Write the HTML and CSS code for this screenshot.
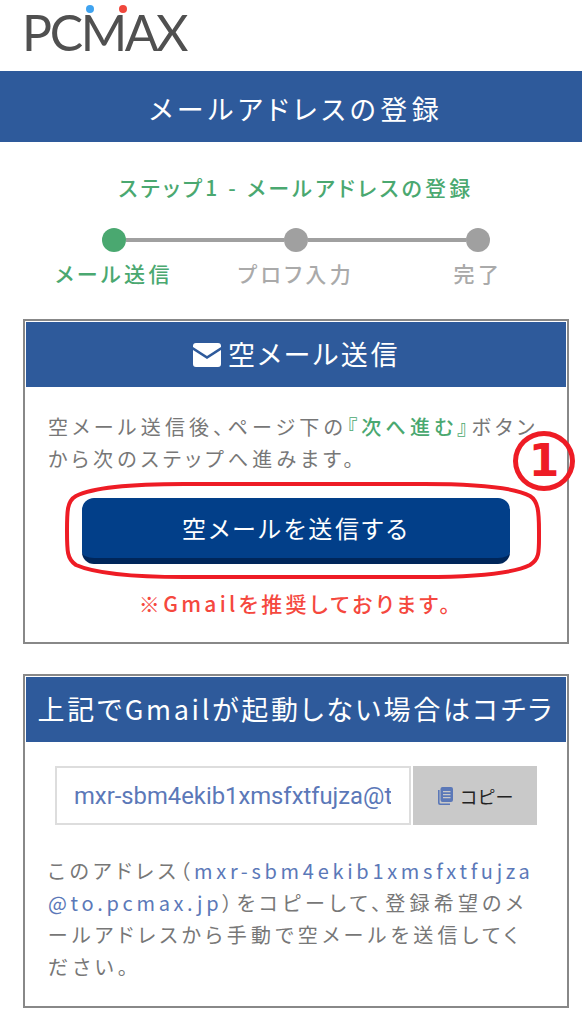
FILE: index.html
```html
<!DOCTYPE html>
<html lang="ja">
<head>
  <meta charset="UTF-8" />
  <meta name="viewport" content="width=device-width, initial-scale=1.0"/>
  <title>メールアドレスの登録</title>
  <link rel="stylesheet" href="styles.css">
</head>
<body>
  <header class="logo-bar">
    <div class="logo">
      <span class="logo-text">PCMAX</span>
      <span class="logo-dot logo-dot-blue"></span>
      <span class="logo-dot logo-dot-red"></span>
    </div>
  </header>

  <h1 class="page-title">メールアドレスの登録</h1>

  <p class="step-title">ステップ1 - メールアドレスの登録</p>

  <div class="stepper">
    <div class="track">
      <span class="dot dot-active"></span>
      <span class="bar"></span>
      <span class="dot"></span>
      <span class="bar"></span>
      <span class="dot"></span>
    </div>
    <div class="labels">
      <span class="label-active">メール送信</span>
      <span>プロフ入力</span>
      <span>完了</span>
    </div>
  </div>

  <section class="card card-send">
    <h2 class="card-head">
      <svg class="mail-icon" viewBox="0 0 28 24" aria-hidden="true">
        <path d="M3 0h22a3 3 0 0 1 3 3v1L14 13 0 4V3a3 3 0 0 1 3-3z" fill="#fff"/>
        <path d="M0 7l14 9 14-9v14a3 3 0 0 1-3 3H3a3 3 0 0 1-3-3z" fill="#fff"/>
      </svg>空メール送信
    </h2>
    <p class="card-text">空メール送信後、ページ下の<span class="green">『次へ進む』</span>ボタンから次のステップへ進みます。</p>
    <button class="send-btn">空メールを送信する</button>
    <p class="note">※Gmailを推奨しております。</p>

    <svg class="mark-oval" viewBox="0 0 478 100" aria-hidden="true">
      <path d="M12 15C30 6 70 3 120 3L360 3C410 3 450 6 466 15C474 20 475 30 475 50C475 70 476 78 466 84C450 92 410 96 360 96L120 96C70 96 30 92 12 84C3 78 3 70 3 50C3 30 3 20 12 15Z" fill="none" stroke="#ee1c25" stroke-width="4"/>
    </svg>
    <span class="mark-num">1</span>
  </section>

  <section class="card card-copy">
    <h2 class="card-head card-head-long">上記でGmailが起動しない場合はコチラ</h2>
    <div class="copy-row">
      <input class="copy-input" type="text" value="mxr-sbm4ekib1xmsfxtfujza@to.pcmax.jp" readonly>
      <button class="copy-btn">
        <svg class="copy-icon" viewBox="0 0 16 18" aria-hidden="true">
          <path d="M1 3v13a2 2 0 0 0 2 2h10v-1.6H3.6a1 1 0 0 1-1-1V3z" fill="#5b78b8"/>
          <path fill-rule="evenodd" d="M5.5 0H14a2 2 0 0 1 2 2v11a2 2 0 0 1-2 2H5.500a2 2 0 0 1-2-2V2a2 2 0 0 1 2-2zM6 4v1.300h7.500V4zM6 7v1.300h7.500V7zM6 10v1.300h7.500V10z" fill="#5b78b8"/>
        </svg>コピー
      </button>
    </div>
    <p class="card-text card-text-copy">このアドレス（<span class="link">mxr-sbm4ekib1xmsfxtfujza</span><br><span class="link">@to.pcmax.jp</span>）をコピーして、登録希望のメールアドレスから手動で空メールを送信してください。</p>
  </section>
</body>
</html>
```

FILE: styles.css
```css
* {
  box-sizing: border-box;
}

body {
  margin: 0;
  background: #fff;
  font-family: "Noto Sans CJK JP", "Noto Sans", sans-serif;
  font-feature-settings: "palt";
  color: #777;
  overflow: hidden;
}

.logo-bar {
  height: 71px;
  padding: 2px 0 0 22px;
}

.logo {
  position: relative;
  width: 170px;
  height: 60px;
}

.logo-text {
  font-family: Lato, sans-serif;
  font-size: 50px;
  line-height: 60px;
  font-weight: 400;
  letter-spacing: -2.4px;
  color: #505050;
}

.logo-dot {
  position: absolute;
  top: 3px;
  width: 8px;
  height: 8px;
  border-radius: 50%;
}

.logo-dot-blue {
  left: 64px;
  background: #3fa3f0;
}

.logo-dot-red {
  left: 97px;
  background: #f0473c;
}

.page-title {
  margin: 0;
  height: 71px;
  padding-left: 10px;
  background: #2e5a9b;
  color: #fff;
  font-size: 27px;
  font-weight: 400;
  line-height: 76px;
  letter-spacing: 4.4px;
  text-align: center;
}

.step-title {
  margin: 30px 0 0;
  height: 30px;
  padding-left: 10px;
  font-size: 21px;
  font-weight: 500;
  line-height: 30px;
  letter-spacing: 3.2px;
  text-align: center;
  color: #4aa870;
}

.stepper {
  margin: 26px 13px 0 23px;
}

.track {
  display: flex;
  align-items: center;
  margin: 0 79px;
  height: 24px;
}

.dot {
  width: 24px;
  height: 24px;
  border-radius: 50%;
  background: #a0a0a0;
  flex: none;
}

.dot-active {
  background: #4aa870;
}

.bar {
  flex: 1;
  height: 4px;
  background: #a0a0a0;
}

.labels {
  display: grid;
  grid-template-columns: repeat(3, 1fr);
  margin-top: 6px;
  height: 30px;
  font-size: 21px;
  font-weight: 500;
  line-height: 30px;
  letter-spacing: 3.4px;
  text-align: center;
  color: #aaa;
}

.label-active {
  color: #4aa870;
}

.card {
  position: relative;
  margin: 30px 13px 0 23px;
  border: 2px solid #888;
  padding: 1px;
}

.card-send {
  height: 325px;
  margin-top: 31px;
}

.card-copy {
  height: 334px;
}

.card-head {
  margin: 0;
  height: 65px;
  background: #2e5a9b;
  color: #fff;
  font-size: 27px;
  font-weight: 400;
  line-height: 64px;
  letter-spacing: 2.6px;
  text-align: center;
}

.card-head-long {
  letter-spacing: 2.7px;
  white-space: nowrap;
}

.mail-icon {
  width: 30px;
  height: 24px;
  margin-right: 6px;
  vertical-align: -2px;
}

.card-text {
  margin: 24px 22px 0 22px;
  font-size: 20px;
  line-height: 32px;
  letter-spacing: 4.2px;
  color: #777;
}

.green {
  font-weight: 500;
  color: #4aa870;
}

.send-btn {
  display: block;
  width: 428px;
  height: 66px;
  margin: 23px 0 0 56px;
  padding: 0 0 2px;
  border: none;
  border-bottom: 6px solid #00265a;
  border-radius: 12px;
  background: #023f89;
  color: #fff;
  font-family: inherit;
  font-feature-settings: "palt";
  font-size: 24px;
  letter-spacing: 2.6px;
}

.note {
  margin: 23px 0 0;
  font-size: 21px;
  font-weight: 500;
  line-height: 32px;
  letter-spacing: 3.3px;
  text-align: center;
  color: #f5483e;
}

/* red hand marks drawn over the card */
.mark-oval {
  position: absolute;
  left: 39px;
  top: 160px;
  width: 478px;
  height: 100px;
}

.mark-num {
  position: absolute;
  left: 488px;
  top: 110px;
  width: 62px;
  height: 60px;
  border: 5px solid #ee1c25;
  border-radius: 50%;
  color: #ee1c25;
  font-family: "DejaVu Sans", sans-serif;
  font-size: 44px;
  font-weight: 700;
  line-height: 50px;
  text-align: center;
}

.copy-row {
  display: flex;
  gap: 2px;
  margin: 24px 0 0 29px;
  height: 59px;
}

.copy-input {
  width: 356px;
  height: 59px;
  padding: 0 18px 0 17px;
  border: 2px solid #ddd;
  background: #fff;
  color: #5b78b8;
  font-family: Roboto, sans-serif;
  font-size: 23.8px;
  outline: none;
}

.copy-btn {
  display: flex;
  align-items: center;
  justify-content: center;
  gap: 7px;
  width: 124px;
  height: 59px;
  padding: 0;
  border: none;
  background: #c9c9c9;
  color: #222;
  font-family: inherit;
  font-size: 18px;
}

.copy-icon {
  width: 16px;
  height: 18px;
}

.card-text-copy {
  margin-top: 30px;
  margin-right: 26px;
}

.link {
  color: #5b78b8;
  letter-spacing: 3.7px;
  white-space: nowrap;
}
```
